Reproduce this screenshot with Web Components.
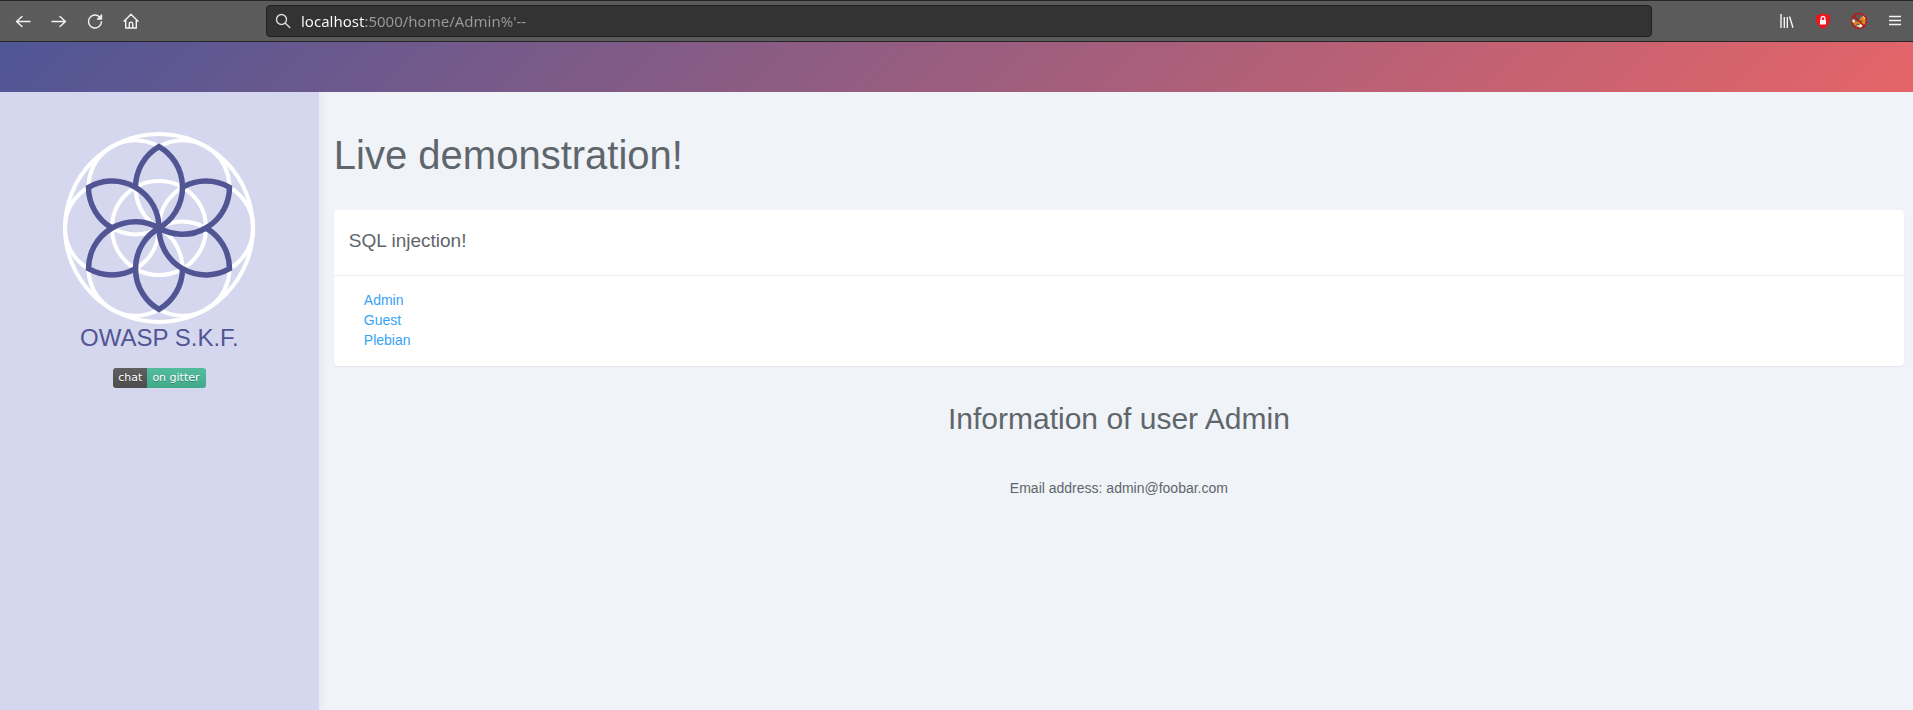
<!DOCTYPE html>
<html lang="en">
<head>
<meta charset="utf-8">
<meta name="viewport" content="width=device-width, initial-scale=1">
<title>OWASP S.K.F. - SQL injection</title>
<style>
html,body{height:100%}
body{margin:0;font:14px/20px "Liberation Sans",Arial,sans-serif;color:#5f666b;background:#f0f3f7}
</style>
</head>
<body>
<lab-window>
  <browser-bar slot="bar" address="localhost:5000/home/Admin%'--"></browser-bar>
  <skf-sidebar slot="side" name="OWASP S.K.F."><gitter-badge></gitter-badge></skf-sidebar>
  <lab-heading>Live demonstration!</lab-heading>
  <lab-card>
    <span slot="title">SQL injection!</span>
    <user-links names="Admin,Guest,Plebian"></user-links>
  </lab-card>
  <user-info name="Admin" email="admin@foobar.com"></user-info>
</lab-window>

<script>
const define = (name, html, fill) => {
  const template = document.createElement('template');
  template.innerHTML = html;
  customElements.define(name, class extends HTMLElement {
    constructor() {
      super();
      this.attachShadow({mode: 'open'}).append(template.content.cloneNode(true));
    }
    connectedCallback() { if (fill) fill(this.shadowRoot, this); }
  });
};

define('lab-window', `
<style>
:host{display:flex;flex-direction:column;min-height:100%}
.banner{height:50px;background:linear-gradient(135deg,#4f5696,#e56568)}
.body{flex:1;display:grid;grid-template-columns:1fr 5fr}
main{padding:35px 9px 32px 15px}
</style>
<slot name="bar"></slot>
<header class="banner"></header>
<div class="body"><slot name="side"></slot><main><slot></slot></main></div>`);

define('browser-bar', `
<style>
:host{display:flex;align-items:center;height:40px;padding:0 8px 0 13px;background:#5b5b5b;border-top:1px solid #262626;border-bottom:1px solid #262626}
button{display:grid;place-items:center;width:20px;height:24px;padding:0;border:0;background:none;color:#f4f4f4}
svg{display:block;width:18px;height:18px;fill:none;stroke:currentColor;stroke-width:1.4;stroke-linecap:round;stroke-linejoin:round}
nav,.tools{display:flex;gap:16px}
.box{flex:1;display:flex;align-items:center;gap:10px;height:30px;margin:0 125px;padding:0 8px;border:1px solid #202020;border-radius:4px;background:#333;color:#dcdcdc}
.box svg{width:16px;height:16px}
input{flex:1;min-width:0;height:28px;padding:0;border:0;outline:0;font:15px/28px "Noto Sans","Open Sans",sans-serif;color:#9a9a9a;
 background:linear-gradient(90deg,#fff 65px,#9a9a9a 65px);-webkit-background-clip:text;background-clip:text;-webkit-text-fill-color:transparent}
</style>
<nav aria-label="Browser">
<button aria-label="Back"><svg viewBox="0 0 18 18"><path d="M16 9.500H2.500M8 4.500 2.500 9.500 8 14.500"/></svg></button>
<button aria-label="Forward"><svg viewBox="0 0 18 18"><path d="M2 9.500h13.500M10 4.500 15.500 9.500 10 14.500"/></svg></button>
<button aria-label="Reload"><svg viewBox="0 0 18 18"><path d="M15.500 9.800a6.500 6.500 0 1 1-2-5"/><path d="M15.700 3v4.200h-4.200z" fill="currentColor" stroke-width="1"/></svg></button>
<button aria-label="Home"><svg viewBox="0 0 18 18"><path d="M2 9.200 9 2.300l7 6.900M3.700 8v8h10.600V8M7.300 16v-4.200a1.700 1.700 0 0 1 3.400 0V16"/></svg></button>
</nav>
<div class="box">
<svg viewBox="0 0 16 16" aria-hidden="true"><circle cx="6.500" cy="6.500" r="5"/><path d="m10.300 10.300 4.500 4.200"/></svg>
<input aria-label="Address" spellcheck="false">
</div>
<div class="tools">
<button aria-label="Library"><svg viewBox="0 0 18 18" style="stroke-linecap:butt"><path d="M3 2v14M6.300 5v11M9.300 5v11M11.500 4.500l3.500 11.300"/></svg></button>
<button aria-label="Protection"><svg viewBox="0 0 18 18"><path d="M9 1c2 1.500 4.500 2 7 2 0 6-.5 10.500-7 14C2.500 13.500 2 9 2 3c2.500 0 5-.5 7-2z" fill="#f3131a" stroke="none"/><rect x="6" y="8" width="6" height="4.500" rx=".5" fill="#fff" stroke="none"/><path d="M7.200 8V6.300a1.800 1.800 0 0 1 3.600 0V8"/></svg></button>
<button aria-label="Blocked extension"><svg viewBox="0 0 18 18"><path d="M4 8l3 2 2-1 2-4 3-1 2 3-1 5-4 3H7l-3-3z" fill="#e08a1e" stroke="none"/><path d="M2 7l3 1-1 3-2-1zM13 3l3 3-2 1zM7 13l4-1 2 2-3 2z" fill="#f5eee5" stroke="none"/><path d="M7 12.500h2M11 9h1" stroke="#59606a"/><circle cx="9" cy="9" r="7.500" stroke="#c5161b"/><path d="M3.700 3.700 14.300 14.300" stroke="#b51312"/></svg></button>
<button aria-label="Menu"><svg viewBox="0 0 18 18" style="stroke-linecap:butt;stroke-width:1.500"><path d="M3 4.500h12M3 8.500h12M3 12.500h12"/></svg></button>
</div>`, (root, host) => { root.querySelector('input').value = host.getAttribute('address'); });

define('skf-sidebar', `
<style>
:host{display:flex;flex-direction:column;align-items:center;padding:40px 0;background:#d5d7ee;color:#515594;box-shadow:0 0 12px rgba(0,0,0,.08);clip-path:inset(0 -20px 0 0)}
svg{display:block;width:192px;height:192px;fill:none}
h2{margin:0 0 16px;font-size:24px;line-height:28px;font-weight:400}
</style>
<svg viewBox="-96 -96 192 192" role="img" aria-label="Security Knowledge Framework"><g class="rings" stroke="#fff" stroke-width="4"><circle r="94"/><circle r="47"/></g><g class="petals" stroke="#515594" stroke-width="5.500"></g></svg>
<h2></h2>
<slot></slot>`, (root, host) => {
  root.querySelector('h2').textContent = host.getAttribute('name');
  const add = (group, tag, attrs) => {
    const node = document.createElementNS('http://www.w3.org/2000/svg', tag);
    for (const key in attrs) node.setAttribute(key, attrs[key]);
    root.querySelector(group).append(node);
  };
  for (let angle = 0; angle < 360; angle += 60) {
    add('.rings', 'circle', {cx: 47, r: 47, transform: `rotate(${angle})`});
    add('.petals', 'path', {d: 'M0 0A47 47 0 0 0 0-81.400A47 47 0 0 0-23.500-40.700', transform: `rotate(${angle})`});
  }
});

define('gitter-badge', `
<style>
:host{display:block}
a{display:flex;height:20px;border-radius:3px;overflow:hidden;font:11px/20px "DejaVu Sans",Verdana,sans-serif;color:#fff;text-decoration:none;text-shadow:0 1px rgba(1,1,1,.3)}
span{padding:0 5px;background:linear-gradient(#5f5f5f,#4d4d4d)}
span+span{padding:0 6px 0 5px;background:linear-gradient(#52bd9d,#41a98a)}
</style>
<a href="#chat"><span>chat</span><span>on gitter</span></a>`);

define('lab-heading', `
<style>
:host{display:block}
h1{margin:0 0 27px;font-size:40px;line-height:56px;font-weight:400}
</style>
<h1><slot></slot></h1>`);

define('lab-card', `
<style>
:host{display:block;background:#fff;border-radius:4px;box-shadow:0 1px 2px rgba(0,0,0,.06)}
h2{margin:0;padding:19px 15px 22px;border-bottom:1px solid #ebedef;font-size:19px;line-height:24px;font-weight:400}
section{padding:14px 30px 16px}
</style>
<h2><slot name="title"></slot></h2><section><slot></slot></section>`);

define('user-links', `
<style>
:host{display:block}
ul{margin:0;padding:0;list-style:none}
a{color:#36a3f7;text-decoration:none}
</style>
<ul></ul>`, (root, host) => {
  root.querySelector('ul').replaceChildren(...host.getAttribute('names').split(',').map(name => {
    const item = document.createElement('li');
    const link = document.createElement('a');
    link.href = '#' + name;
    link.textContent = name;
    item.append(link);
    return item;
  }));
});

define('user-info', `
<style>
:host{display:block;text-align:center}
h2{margin:33px 0 39px;font-size:30px;line-height:40px;font-weight:400}
p{margin:0}
</style>
<h2></h2><p></p>`, (root, host) => {
  root.querySelector('h2').textContent = 'Information of user ' + host.getAttribute('name');
  root.querySelector('p').textContent = 'Email address: ' + host.getAttribute('email');
});
</script>
</body>
</html>
